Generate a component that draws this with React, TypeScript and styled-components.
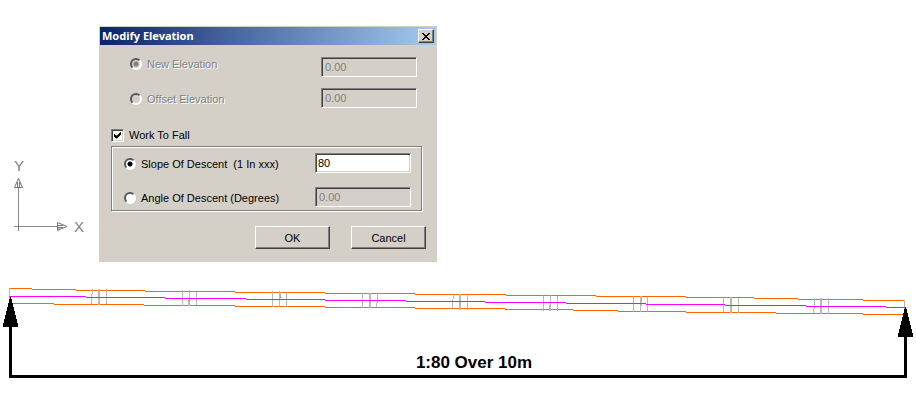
import React from "react";
import styled, { createGlobalStyle, css } from "styled-components";

const face = "#d4d0c8";
const shade = "#808080";
const dark = "#404040";

const GlobalStyle = createGlobalStyle`
  *, *::before, *::after { box-sizing: border-box; }
  body {
    margin: 0;
    background: #fff;
    color: #000;
    font: 11px/14px "Liberation Sans", Arial, sans-serif;
  }
`;

const Page = styled.main`
  padding-top: 26px;
`;

const Viewport = styled.div`
  display: flex;
  align-items: flex-end;
`;

const Axes = styled.svg`
  flex: none;
  display: block;
  width: 99px;
  height: 112px;
  font: 15px "Liberation Sans", Arial, sans-serif;
`;

const Dialog = styled.form`
  width: 338px;
  padding: 1px;
  background: ${face};
`;

const TitleBar = styled.header`
  display: flex;
  align-items: center;
  justify-content: space-between;
  height: 18px;
  padding: 0 2px;
  background: linear-gradient(to right, #0a246a, #a6caf0);
`;

const Title = styled.h1`
  margin: 0;
  color: #fff;
  font: bold 11px/18px "Noto Sans", "Open Sans", sans-serif;
`;

const raised = css`
  border: 1px solid;
  border-color: #fff ${dark} ${dark} #fff;
  background: ${face};
  box-shadow: inset -1px -1px 0 ${shade};
`;

const CloseButton = styled.button`
  ${raised}
  display: flex;
  align-items: center;
  justify-content: center;
  width: 16px;
  height: 14px;
  padding: 0;
`;

const Body = styled.div`
  padding: 12px 10px 12px 11px;
`;

const Options = styled.div`
  display: flex;
  justify-content: space-between;
  padding: 0 9px 0 19px;
`;

const Choices = styled.div<{ $gap: number; $top?: number }>`
  display: grid;
  align-content: start;
  gap: ${(p) => p.$gap}px;
  padding-top: ${(p) => p.$top ?? 0}px;
`;

const Fields = styled.div<{ $gap: number }>`
  display: grid;
  gap: ${(p) => p.$gap}px;
`;

const Choice = styled.label<{ $off?: boolean }>`
  display: flex;
  align-items: center;
  gap: 5px;
  white-space: pre;
  ${(p) => p.$off && `color: ${shade}; text-shadow: 1px 1px 0 #fff;`}
`;

const Radio = styled.input.attrs({ type: "radio" })`
  appearance: none;
  width: 12px;
  height: 12px;
  margin: 0;
  border: 2px solid;
  border-color: #585858 #fff #fff #585858;
  border-radius: 50%;
  background: #fff;
  &:checked {
    background: radial-gradient(circle, #000 2px, #fff 3px);
  }
  &:disabled {
    background: ${face};
  }
  &:disabled:checked {
    background: radial-gradient(circle, ${shade} 2px, ${face} 3px);
  }
`;

const sunken = css`
  border: 1px solid;
  border-color: ${shade} #fff #fff ${shade};
  box-shadow: inset 1px 1px 0 ${dark}, inset -1px -1px 0 ${face};
`;

const CheckBox = styled.input.attrs({ type: "checkbox" })`
  ${sunken}
  appearance: none;
  width: 13px;
  height: 13px;
  margin: 0;
  padding: 2px;
  background: #fff;
  &:checked::before {
    content: "";
    display: block;
    width: 7px;
    height: 7px;
    background: #000;
    clip-path: polygon(0 2px, 2px 4px, 3px 4px, 7px 0, 7px 3px, 3px 7px, 2px 7px, 0 5px);
  }
`;

const Field = styled.input.attrs({ type: "text" })`
  ${sunken}
  width: 96px;
  height: 20px;
  margin: 0;
  padding: 0 2px;
  border-radius: 0;
  outline: none;
  background: #fff;
  color: #000;
  font: inherit;
  &:disabled {
    padding: 0 3px;
    background: ${face};
    color: ${shade};
  }
`;

const CheckLine = styled.div`
  display: flex;
  margin: 20px 0 4px;
`;

const Group = styled.fieldset`
  display: flex;
  justify-content: space-between;
  min-width: 0;
  margin: 0 4px 0 0;
  padding: 6px 10px 3px 12px;
  border: 1px solid ${shade};
  box-shadow: 1px 1px 0 #fff, inset 1px 1px 0 #fff;
`;

const Actions = styled.div`
  display: flex;
  justify-content: flex-end;
  gap: 21px;
  margin-top: 15px;
`;

const PushButton = styled.button`
  ${raised}
  width: 75px;
  height: 23px;
  padding: 0;
  color: #000;
  font: inherit;
`;

const Section = styled.svg`
  display: block;
  width: 100%;
  height: auto;
  font: bold 17px "Liberation Sans", Arial, sans-serif;
`;

/* A pixel staircase: starting row, then the x at which each row begins; the last x ends the line. */
const stairs = (row: number, xs: number[]) =>
  xs
    .slice(0, -1)
    .map((x, i) => `M${x} ${row + i}H${xs[i + 1]}v1H${x}z`)
    .join("");

const upperEdge = stairs(288, [9, 32, 76, 145, 235, 325, 415, 506, 596, 686, 754, 798, 863, 905]);
const centreLine = stairs(296, [9, 86, 165, 246, 325, 406, 485, 566, 646, 725, 806, 886, 905]);
const lowerEdge = stairs(303, [12, 54, 144, 235, 325, 415, 505, 573, 618, 686, 776, 863, 905]);

/* Joint marks: x, top, bottom, width. */
const joints: [number, number, number, number][] = [
  [9, 288, 301, 1],
  [92, 289, 294, 1], [91, 294, 305, 1], [98, 289, 305, 2], [106, 289, 304, 1],
  [182, 290, 306, 1], [189, 290, 306, 1], [188, 301, 306, 1], [196, 292, 305, 1],
  [272, 291, 307, 1], [279, 291, 307, 1], [280, 292, 297, 1], [286, 293, 307, 1],
  [362, 293, 308, 1], [369, 293, 308, 2], [377, 293, 303, 1], [376, 303, 307, 1],
  [453, 294, 299, 1], [452, 299, 309, 1], [459, 294, 310, 2], [467, 294, 310, 1],
  [543, 295, 311, 1], [550, 295, 311, 1], [549, 305, 311, 1], [557, 296, 311, 1],
  [633, 296, 312, 1], [640, 296, 312, 1], [641, 296, 306, 1], [647, 297, 312, 1],
  [723, 297, 313, 1], [730, 297, 313, 2], [738, 298, 313, 1],
  [814, 298, 309, 1], [813, 309, 314, 1], [820, 298, 314, 2], [828, 298, 314, 1],
  [904, 300, 311, 1],
];
const jointMarks = joints.map(([x, t, b, w]) => `M${x} ${t}h${w}V${b}h-${w}z`).join("");

export default function App() {
  return (
    <Page>
      <GlobalStyle />
      <Viewport>
        <Axes viewBox="0 150 99 112" role="img" aria-label="X and Y axes">
          <g fill="none" stroke="#8a8a8a">
            <path d="M18.5 187V231M14 226.5H57" />
            <path d="M18.5 178.5L14.5 187.5H22.5ZM17.5 182V187M19.5 182V187" stroke="#777" />
            <path d="M67 226.5L57.5 222.5V230.5ZM58 225.5H63M58 227.5H63M58 229H60" stroke="#777" />
          </g>
          <path d="M18 226h1v1h-1z" fill="#3a4ab0" />
          <g fill="#808080" textAnchor="middle">
            <text x="19" y="171">Y</text>
            <text x="79" y="232">X</text>
          </g>
        </Axes>
        <Dialog onSubmit={(e) => e.preventDefault()}>
          <TitleBar>
            <Title>Modify Elevation</Title>
            <CloseButton type="button" aria-label="Close">
              <svg width="8" height="7" viewBox="0 0 8 7" shapeRendering="crispEdges">
                <path d="M0 0h2v1h-2zM6 0h2v1h-2zM1 1h2v1h-2zM5 1h2v1h-2zM2 2h4v1h-4zM3 3h2v1h-2zM2 4h4v1h-4zM1 5h2v1h-2zM5 5h2v1h-2zM0 6h2v1h-2zM6 6h2v1h-2z" />
              </svg>
            </CloseButton>
          </TitleBar>
          <Body>
            <Options>
              <Choices $gap={21}>
                <Choice $off>
                  <Radio name="mode" disabled defaultChecked />
                  New Elevation
                </Choice>
                <Choice $off>
                  <Radio name="mode" disabled />
                  Offset Elevation
                </Choice>
              </Choices>
              <Fields $gap={11}>
                <Field aria-label="New Elevation" defaultValue="0.00" disabled />
                <Field aria-label="Offset Elevation" defaultValue="0.00" disabled />
              </Fields>
            </Options>
            <CheckLine>
              <Choice>
                <CheckBox defaultChecked />
                Work To Fall
              </Choice>
            </CheckLine>
            <Group aria-label="Fall">
              <Choices $gap={20} $top={4}>
                <Choice>
                  <Radio name="fall" defaultChecked />
                  {"Slope Of Descent  (1 In xxx)"}
                </Choice>
                <Choice>
                  <Radio name="fall" />
                  Angle Of Descent (Degrees)
                </Choice>
              </Choices>
              <Fields $gap={14}>
                <Field aria-label="Slope Of Descent" defaultValue="80" />
                <Field aria-label="Angle Of Descent" defaultValue="0.00" disabled />
              </Fields>
            </Group>
            <Actions>
              <PushButton type="submit">OK</PushButton>
              <PushButton type="button">Cancel</PushButton>
            </Actions>
          </Body>
        </Dialog>
      </Viewport>
      <Section viewBox="0 262 916 138" role="img" aria-label="Pipe run falling 1:80 over 10m">
        <g shapeRendering="crispEdges">
          <path d={upperEdge + lowerEdge} fill="#ff6600" />
          <path d={jointMarks} fill="#b8b8b8" />
          <path d="M188 300h1v1h-1zM280 297h1v1h-1z" fill="#ff6600" />
          <path d={centreLine} fill="#ff00ff" />
          <path d="M9 320h3V375H904V330h3V378H9z" />
          <path d="M10 297h1L18 325v2H3v-2zM905 307h1L913 335v2H898v-2z" />
        </g>
        <text x="474" y="368" textAnchor="middle">1:80 Over 10m</text>
      </Section>
    </Page>
  );
}
